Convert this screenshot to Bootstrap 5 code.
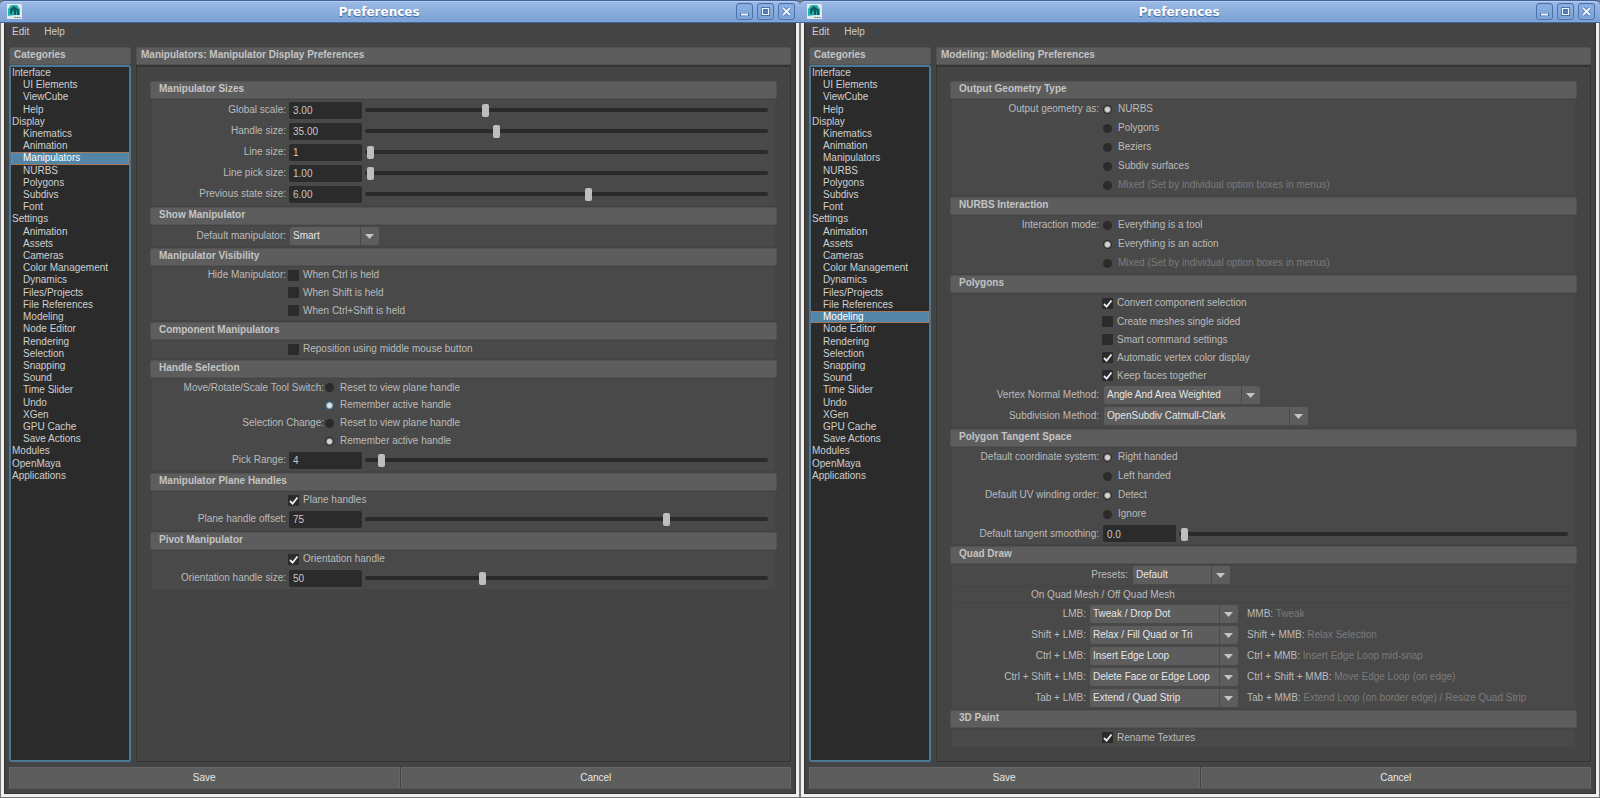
<!DOCTYPE html>
<html lang="en">
<head>
<meta charset="utf-8">
<meta name="viewport" content="width=device-width, initial-scale=1">
<title>Preferences</title>
<link href="https://cdn.jsdelivr.net/npm/bootstrap@5.3.0/dist/css/bootstrap.min.css" rel="stylesheet">
<style>
:root{--panel:#444;--group:#494949;--bar:#5d5d5d;--well:#2b2b2b;--ink:#bbb}
body{background:#777;color:var(--ink);font-family:"Liberation Sans",Arial,sans-serif;font-size:10px;line-height:12px}
button,input,select{font-family:inherit;font-size:inherit;line-height:inherit}
.desk{min-height:100vh}
/* window frame */
.win{background:var(--panel);border:1px solid #777;border-top:0;border-radius:6px 6px 0 0;min-width:0}
.titlebar{height:23px;margin:0 -1px;padding:0 5px 0 7px;background:linear-gradient(#9bbae6,#7ea3d5 90%);border-top:1px solid #41619a;border-bottom:1px solid #44639a;border-radius:5px 5px 0 0;box-shadow:inset 0 1px #b4cdf0}
.titlebar h1{font:bold 12px/20px "DejaVu Sans",sans-serif;color:#fff;text-shadow:0 1px 1px #3f649c;margin:0}
.winbtn{width:17px;height:17px;padding:0;border:1px solid #4a72aa;border-radius:3px;background:linear-gradient(#90b2e2,#779fd3);display:grid;place-items:center;box-shadow:inset 0 0 0 1px #86aade}
.frame{border:solid #f1efed;border-width:0 3px 3px}
.inner{border:1px solid #333;border-top:0;padding:0 4px 4px}
.menus{height:24px;padding:2px 3px;gap:15px}
.menus a{color:#cecece;text-decoration:none;line-height:14px}
.columns{gap:5px}
.bar{height:18px;background:var(--bar);border:1px solid #525252;border-radius:2px;font-size:10px;font-weight:700;line-height:14px;color:#c4c4c4;margin:0}
/* category list */
.side{width:122px}
.cats{background:var(--well);border:2px solid #4b7896;border-radius:2px}
.cats ul{height:415px;display:grid;grid-auto-rows:1fr}
.cats a{display:block;height:100%;color:#cfcfcf;text-decoration:none;padding-left:1px;white-space:nowrap}
.cats a.child{padding-left:12px}
.cats a.active{background:#5285a6;color:#fff;outline:1px dotted #b0805e;outline-offset:-1px}
.view{border:1px solid #343434;border-top-width:2px;padding:14px 13px 8px}
/* option groups */
.view .bar{padding-left:8px}
.group{background:var(--group);margin:1px 2px 2px;padding-bottom:1px;display:flex;flex-direction:column;gap:1px;min-width:0}
.line{display:flex;align-items:center;height:20px}
.line-19{height:19px}.line-18{height:18px}.line-17{height:17px}.line-16{height:16px}
.cap{width:134px;margin-right:3px;text-align:right;white-space:nowrap;flex:none}
.cap-tool{width:172px;margin-right:1px}
.wide .cap{width:147px;margin-right:4px}
.wide .cap-preset{width:176px;margin-right:4px}
.wide .cap-mouse{width:134px;margin-right:3px}
.num{width:73px;height:17px;border:0;border-radius:2px;background:var(--well);color:#c8c8c8;padding:1px 4px 0;flex:none}
.track{-webkit-appearance:none;appearance:none;background:none;height:17px;min-width:0;flex:1;margin:0 7px 0 3px;padding:0}
.track::-webkit-slider-runnable-track{height:4px;border-radius:2px;background:#2a2a2a}
.track::-webkit-slider-thumb{-webkit-appearance:none;width:7px;height:13px;margin-top:-4px;border-radius:2px;background:#bebebe}
.tick,.dot{-webkit-appearance:none;appearance:none;background:var(--well);margin:0;flex:none}
.tick{width:11px;height:11px;border-radius:1px;margin-left:-1px;margin-right:4px}
.tick:checked{background:var(--well) url("data:image/svg+xml,%3Csvg xmlns='http://www.w3.org/2000/svg' viewBox='0 0 11 11'%3E%3Cpath d='M2 6l2.6 2.6L9.500 2.500' fill='none' stroke='%23eee' stroke-width='1.8'/%3E%3C/svg%3E")}
.dot{width:9px;height:9px;border-radius:50%;margin-right:6px}
.dot:checked{background:radial-gradient(circle,#d4d4d4 0 2px,#2b2b2b 4px)}
.dot.hot:checked{background:radial-gradient(circle,#d6e2ec 0 2px,#33566e 4px)}
.off{color:#7b7b7b}
.pick{-webkit-appearance:none;appearance:none;height:18px;margin-left:1px;border:0;border-radius:2px;color:#e6e6e6;padding:0 20px 0 3px;flex:none;background:url("data:image/svg+xml,%3Csvg xmlns='http://www.w3.org/2000/svg' viewBox='0 0 19 18'%3E%3Cpath d='M0 0h1v18H0z' fill='%234b4b4b'/%3E%3Cpath d='M5 7h9L9.500 12z' fill='%23c4c4c4'/%3E%3C/svg%3E") right/19px 18px no-repeat var(--bar)}
.w-smart{width:89px}.w-angle{width:156px}.w-subdiv{width:204px}.w-preset{width:97px}.w-mouse{width:148px}
.mmb{margin-left:9px;white-space:nowrap}
.quad{height:17px;border:solid #434343;border-width:1px 0;margin:0 2px;padding-left:77px;line-height:15px}
.actions{gap:1px;margin-top:5px}
.act{height:22px;border:1px solid #666;border-bottom-color:#555;border-radius:1px;background:var(--bar);color:#e8e8e8;padding:0;flex:1}
</style>
</head>
<body>
<main class="desk d-flex">

<section class="win d-flex flex-column flex-fill w-50">
  <header class="titlebar d-flex align-items-center">
    <svg width="15" height="15" viewBox="0 0 15 15" aria-hidden="true"><path d="M0 0h15v15H0z" fill="#dfeae9"/><path d="M1 12V5l3-4h6l3 4v6H8z" fill="#25b5ae"/><path d="M3 9V5l4-3 5 4v5h-2V8L9 6v5H7V6L5 8v3z" fill="#0b5c60"/><path d="M7 13.500h7" stroke="#999"/></svg>
    <h1 class="flex-fill text-center">Preferences</h1>
    <div class="d-flex gap-1">
      <button class="winbtn" aria-label="Minimize"><svg width="11" height="11" viewBox="0 0 11 11"><path d="M1 7h9v3H1z" fill="#4a72aa"/><path d="M2 7.500h7v2H2z" fill="#f2f6fc"/></svg></button>
      <button class="winbtn" aria-label="Maximize"><svg width="11" height="11" viewBox="0 0 11 11"><path d="M2 2h7v7H2zM4 4h3v3H4z" fill="none" stroke="#4a72aa" stroke-width="2"/><path d="M2.500 2.500h6v6h-6z" fill="none" stroke="#f2f6fc" stroke-width="1.200"/></svg></button>
      <button class="winbtn" aria-label="Close"><svg width="11" height="11" viewBox="0 0 11 11"><path d="M2 2l7 7M9 2l-7 7" stroke="#4a72aa" stroke-width="3.600"/><path d="M2 2l7 7M9 2l-7 7" stroke="#f2f6fc" stroke-width="2"/></svg></button>
    </div>
  </header>
  <div class="frame d-flex flex-column flex-fill"><div class="inner d-flex flex-column flex-fill">
    <nav class="menus d-flex"><a href="#">Edit</a><a href="#">Help</a></nav>
    <div class="columns d-flex flex-fill">
      <div class="side d-flex flex-column"><h2 class="bar ps-1">Categories</h2><nav class="cats flex-fill"><ul class="list-unstyled mb-0" data-active="Manipulators"></ul></nav></div>
      <div class="d-flex flex-column flex-fill">
        <h2 class="bar ps-1">Manipulators: Manipulator Display Preferences</h2>
        <form class="view flex-fill">
          <h3 class="bar">Manipulator Sizes</h3>
          <div class="group">
            <div class="line"><label class="cap" for="gs">Global scale:</label><input class="num" id="gs" value="3.00"><input type="range" class="track" aria-label="Global scale" max="1000" value="295"></div>
            <div class="line"><label class="cap" for="hs">Handle size:</label><input class="num" id="hs" value="35.00"><input type="range" class="track" aria-label="Handle size" max="1000" value="324"></div>
            <div class="line"><label class="cap" for="ls">Line size:</label><input class="num" id="ls" value="1"><input type="range" class="track" aria-label="Line size" max="1000" value="4"></div>
            <div class="line"><label class="cap" for="lp">Line pick size:</label><input class="num" id="lp" value="1.00"><input type="range" class="track" aria-label="Line pick size" max="1000" value="4"></div>
            <div class="line"><label class="cap" for="ps">Previous state size:</label><input class="num" id="ps" value="6.00"><input type="range" class="track" aria-label="Previous state size" max="1000" value="555"></div>
          </div>
          <h3 class="bar">Show Manipulator</h3>
          <div class="group">
            <div class="line line-19"><label class="cap" for="dm">Default manipulator:</label><select class="pick w-smart" id="dm"><option>Smart</option></select></div>
          </div>
          <h3 class="bar">Manipulator Visibility</h3>
          <div class="group">
            <div class="line line-16"><span class="cap">Hide Manipulator:</span><input type="checkbox" class="tick" id="v1"><label for="v1">When Ctrl is held</label></div>
            <div class="line line-17"><span class="cap"></span><input type="checkbox" class="tick" id="v2"><label for="v2">When Shift is held</label></div>
            <div class="line line-17"><span class="cap"></span><input type="checkbox" class="tick" id="v3"><label for="v3">When Ctrl+Shift is held</label></div>
          </div>
          <h3 class="bar">Component Manipulators</h3>
          <div class="group">
            <div class="line line-16"><span class="cap"></span><input type="checkbox" class="tick" id="cm"><label for="cm">Reposition using middle mouse button</label></div>
          </div>
          <h3 class="bar">Handle Selection</h3>
          <div class="group">
            <div class="line line-17"><span class="cap cap-tool">Move/Rotate/Scale Tool Switch:</span><input type="radio" name="ts" class="dot" id="ts1"><label for="ts1">Reset to view plane handle</label></div>
            <div class="line line-16"><span class="cap cap-tool"></span><input type="radio" name="ts" class="dot hot" id="ts2" checked><label for="ts2">Remember active handle</label></div>
            <div class="line line-18"><span class="cap cap-tool">Selection Change:</span><input type="radio" name="sc" class="dot" id="sc1"><label for="sc1">Reset to view plane handle</label></div>
            <div class="line line-16"><span class="cap cap-tool"></span><input type="radio" name="sc" class="dot" id="sc2" checked><label for="sc2">Remember active handle</label></div>
            <div class="line"><label class="cap" for="pr">Pick Range:</label><input class="num" id="pr" value="4"><input type="range" class="track" aria-label="Pick Range" max="1000" value="34"></div>
          </div>
          <h3 class="bar">Manipulator Plane Handles</h3>
          <div class="group">
            <div class="line line-16"><span class="cap"></span><input type="checkbox" class="tick" id="ph" checked><label for="ph">Plane handles</label></div>
            <div class="line"><label class="cap" for="po">Plane handle offset:</label><input class="num" id="po" value="75"><input type="range" class="track" aria-label="Plane handle offset" max="1000" value="752"></div>
          </div>
          <h3 class="bar">Pivot Manipulator</h3>
          <div class="group">
            <div class="line line-16"><span class="cap"></span><input type="checkbox" class="tick" id="oh" checked><label for="oh">Orientation handle</label></div>
            <div class="line"><label class="cap" for="os">Orientation handle size:</label><input class="num" id="os" value="50"><input type="range" class="track" aria-label="Orientation handle size" max="1000" value="288"></div>
          </div>
        </form>
      </div>
    </div>
    <footer class="actions d-flex"><button class="act">Save</button><button class="act">Cancel</button></footer>
  </div></div>
</section>

<section class="win d-flex flex-column flex-fill w-50">
  <header class="titlebar d-flex align-items-center">
    <svg width="15" height="15" viewBox="0 0 15 15" aria-hidden="true"><path d="M0 0h15v15H0z" fill="#dfeae9"/><path d="M1 12V5l3-4h6l3 4v6H8z" fill="#25b5ae"/><path d="M3 9V5l4-3 5 4v5h-2V8L9 6v5H7V6L5 8v3z" fill="#0b5c60"/><path d="M7 13.500h7" stroke="#999"/></svg>
    <h1 class="flex-fill text-center">Preferences</h1>
    <div class="d-flex gap-1">
      <button class="winbtn" aria-label="Minimize"><svg width="11" height="11" viewBox="0 0 11 11"><path d="M1 7h9v3H1z" fill="#4a72aa"/><path d="M2 7.500h7v2H2z" fill="#f2f6fc"/></svg></button>
      <button class="winbtn" aria-label="Maximize"><svg width="11" height="11" viewBox="0 0 11 11"><path d="M2 2h7v7H2zM4 4h3v3H4z" fill="none" stroke="#4a72aa" stroke-width="2"/><path d="M2.500 2.500h6v6h-6z" fill="none" stroke="#f2f6fc" stroke-width="1.200"/></svg></button>
      <button class="winbtn" aria-label="Close"><svg width="11" height="11" viewBox="0 0 11 11"><path d="M2 2l7 7M9 2l-7 7" stroke="#4a72aa" stroke-width="3.600"/><path d="M2 2l7 7M9 2l-7 7" stroke="#f2f6fc" stroke-width="2"/></svg></button>
    </div>
  </header>
  <div class="frame d-flex flex-column flex-fill"><div class="inner d-flex flex-column flex-fill">
    <nav class="menus d-flex"><a href="#">Edit</a><a href="#">Help</a></nav>
    <div class="columns d-flex flex-fill">
      <div class="side d-flex flex-column"><h2 class="bar ps-1">Categories</h2><nav class="cats flex-fill"><ul class="list-unstyled mb-0" data-active="Modeling"></ul></nav></div>
      <div class="d-flex flex-column flex-fill">
        <h2 class="bar ps-1">Modeling: Modeling Preferences</h2>
        <form class="view wide flex-fill">
          <h3 class="bar">Output Geometry Type</h3>
          <div class="group">
            <div class="line line-18"><span class="cap">Output geometry as:</span><input type="radio" name="og" class="dot" id="og1" checked><label for="og1">NURBS</label></div>
            <div class="line line-18"><span class="cap"></span><input type="radio" name="og" class="dot" id="og2"><label for="og2">Polygons</label></div>
            <div class="line line-18"><span class="cap"></span><input type="radio" name="og" class="dot" id="og3"><label for="og3">Beziers</label></div>
            <div class="line line-18"><span class="cap"></span><input type="radio" name="og" class="dot" id="og4"><label for="og4">Subdiv surfaces</label></div>
            <div class="line line-18"><span class="cap"></span><input type="radio" name="og" class="dot" id="og5" disabled><label class="off" for="og5">Mixed (Set by individual option boxes in menus)</label></div>
          </div>
          <h3 class="bar">NURBS Interaction</h3>
          <div class="group">
            <div class="line line-18"><span class="cap">Interaction mode:</span><input type="radio" name="im" class="dot" id="im1"><label for="im1">Everything is a tool</label></div>
            <div class="line line-18"><span class="cap"></span><input type="radio" name="im" class="dot" id="im2" checked><label for="im2">Everything is an action</label></div>
            <div class="line line-18"><span class="cap"></span><input type="radio" name="im" class="dot" id="im3" disabled><label class="off" for="im3">Mixed (Set by individual option boxes in menus)</label></div>
          </div>
          <h3 class="bar">Polygons</h3>
          <div class="group">
            <div class="line line-18"><span class="cap"></span><input type="checkbox" class="tick" id="p1" checked><label for="p1">Convert component selection</label></div>
            <div class="line line-17"><span class="cap"></span><input type="checkbox" class="tick" id="p2"><label for="p2">Create meshes single sided</label></div>
            <div class="line line-17"><span class="cap"></span><input type="checkbox" class="tick" id="p3"><label for="p3">Smart command settings</label></div>
            <div class="line line-17"><span class="cap"></span><input type="checkbox" class="tick" id="p4" checked><label for="p4">Automatic vertex color display</label></div>
            <div class="line line-17"><span class="cap"></span><input type="checkbox" class="tick" id="p5" checked><label for="p5">Keep faces together</label></div>
            <div class="line"><label class="cap" for="vn">Vertex Normal Method:</label><select class="pick w-angle" id="vn"><option>Angle And Area Weighted</option></select></div>
            <div class="line"><label class="cap" for="sm">Subdivision Method:</label><select class="pick w-subdiv" id="sm"><option>OpenSubdiv Catmull-Clark</option></select></div>
          </div>
          <h3 class="bar">Polygon Tangent Space</h3>
          <div class="group">
            <div class="line line-18"><span class="cap">Default coordinate system:</span><input type="radio" name="cs" class="dot" id="cs1" checked><label for="cs1">Right handed</label></div>
            <div class="line line-18"><span class="cap"></span><input type="radio" name="cs" class="dot" id="cs2"><label for="cs2">Left handed</label></div>
            <div class="line line-18"><span class="cap">Default UV winding order:</span><input type="radio" name="uv" class="dot" id="uv1" checked><label for="uv1">Detect</label></div>
            <div class="line line-18"><span class="cap"></span><input type="radio" name="uv" class="dot" id="uv2"><label for="uv2">Ignore</label></div>
            <div class="line line-19"><label class="cap" for="dt">Default tangent smoothing:</label><input class="num" id="dt" value="0.0"><input type="range" class="track" aria-label="Default tangent smoothing" max="1000" value="4"></div>
          </div>
          <h3 class="bar">Quad Draw</h3>
          <div class="group">
            <div class="line"><label class="cap cap-preset" for="pre">Presets:</label><select class="pick w-preset" id="pre"><option>Default</option></select></div>
            <div class="quad">On Quad Mesh / Off Quad Mesh</div>
            <div class="line"><label class="cap cap-mouse" for="m1">LMB:</label><select class="pick w-mouse" id="m1"><option>Tweak / Drop Dot</option></select><span class="mmb">MMB: <span class="off">Tweak</span></span></div>
            <div class="line"><label class="cap cap-mouse" for="m2">Shift + LMB:</label><select class="pick w-mouse" id="m2"><option>Relax / Fill Quad or Tri</option></select><span class="mmb">Shift + MMB: <span class="off">Relax Selection</span></span></div>
            <div class="line"><label class="cap cap-mouse" for="m3">Ctrl + LMB:</label><select class="pick w-mouse" id="m3"><option>Insert Edge Loop</option></select><span class="mmb">Ctrl + MMB: <span class="off">Insert Edge Loop mid-snap</span></span></div>
            <div class="line"><label class="cap cap-mouse" for="m4">Ctrl + Shift + LMB:</label><select class="pick w-mouse" id="m4"><option>Delete Face or Edge Loop</option></select><span class="mmb">Ctrl + Shift + MMB: <span class="off">Move Edge Loop (on edge)</span></span></div>
            <div class="line line-19"><label class="cap cap-mouse" for="m5">Tab + LMB:</label><select class="pick w-mouse" id="m5"><option>Extend / Quad Strip</option></select><span class="mmb">Tab + MMB: <span class="off">Extend Loop (on border edge) / Resize Quad Strip</span></span></div>
          </div>
          <h3 class="bar">3D Paint</h3>
          <div class="group">
            <div class="line line-17"><span class="cap"></span><input type="checkbox" class="tick" id="rt" checked><label for="rt">Rename Textures</label></div>
          </div>
        </form>
      </div>
    </div>
    <footer class="actions d-flex"><button class="act">Save</button><button class="act">Cancel</button></footer>
  </div></div>
</section>
</main>
<script src="https://cdn.jsdelivr.net/npm/bootstrap@5.3.0/dist/js/bootstrap.bundle.min.js"></script>
<script>
// Each category heading with the pages below it
const categories = [
  ["Interface", "UI Elements", "ViewCube", "Help"],
  ["Display", "Kinematics", "Animation", "Manipulators", "NURBS", "Polygons", "Subdivs", "Font"],
  ["Settings", "Animation", "Assets", "Cameras", "Color Management", "Dynamics", "Files/Projects", "File References", "Modeling", "Node Editor", "Rendering", "Selection", "Snapping", "Sound", "Time Slider", "Undo", "XGen", "GPU Cache", "Save Actions"],
  ["Modules"], ["OpenMaya"], ["Applications"]
];
document.querySelectorAll("[data-active]").forEach(list => {
  categories.forEach(names => names.forEach((name, i) => {
    const link = document.createElement("a");
    link.href = "#";
    link.textContent = name;
    if (i) link.classList.add("child");
    if (name === list.dataset.active) link.classList.add("active");
    const item = document.createElement("li");
    item.append(link);
    list.append(item);
  }));
});
</script>
</body>
</html>
